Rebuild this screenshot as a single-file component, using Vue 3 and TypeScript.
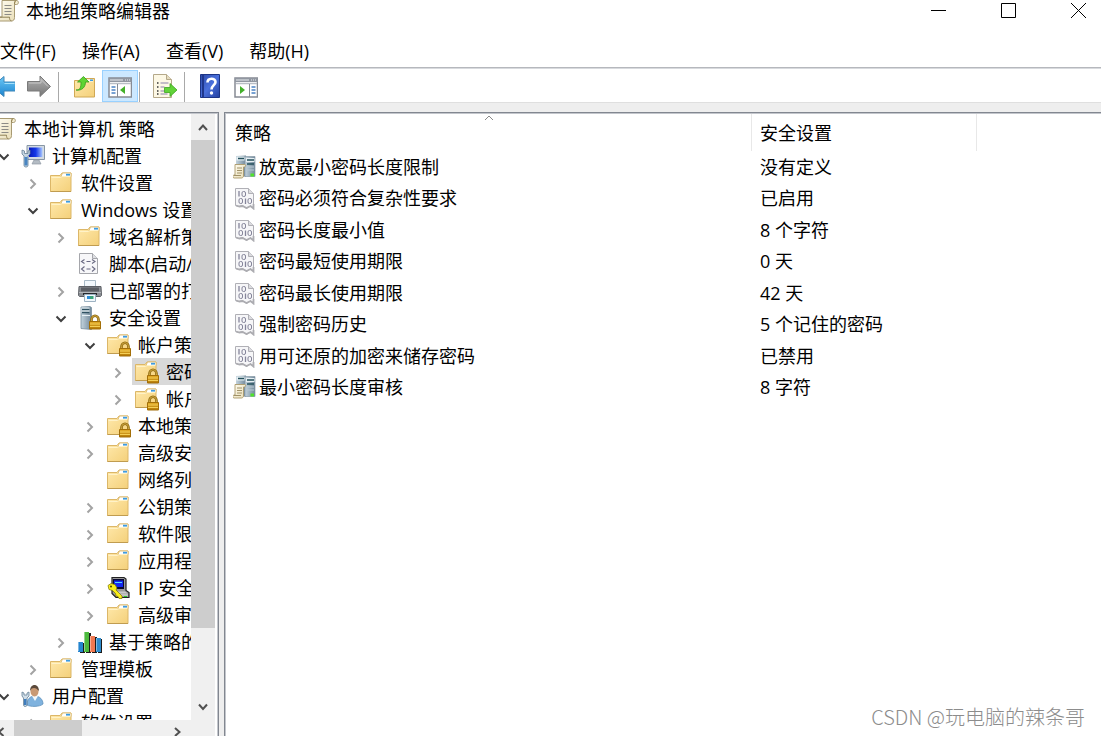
<script setup lang="ts">
import { ref } from 'vue'

interface TreeNode {
  id: number
  label: string
  level: number
  icon: string
  state: 'open' | 'closed' | 'leaf'
}

interface Policy {
  name: string
  value: string
  icon: string
}

const menus: string[] = ['文件(F)', '操作(A)', '查看(V)', '帮助(H)']

const nodes: TreeNode[] = [
  { id: 1, label: '本地计算机 策略', level: 0, icon: 'scroll', state: 'leaf' },
  { id: 2, label: '计算机配置', level: 1, icon: 'computer', state: 'open' },
  { id: 3, label: '软件设置', level: 2, icon: 'folder', state: 'closed' },
  { id: 4, label: 'Windows 设置', level: 2, icon: 'folder', state: 'open' },
  { id: 5, label: '域名解析策略', level: 3, icon: 'folder', state: 'closed' },
  { id: 6, label: '脚本(启动/关机)', level: 3, icon: 'script', state: 'leaf' },
  { id: 7, label: '已部署的打印机', level: 3, icon: 'printer', state: 'closed' },
  { id: 8, label: '安全设置', level: 3, icon: 'server-lock', state: 'open' },
  { id: 9, label: '帐户策略', level: 4, icon: 'folder-lock', state: 'open' },
  { id: 10, label: '密码策略', level: 5, icon: 'folder-lock', state: 'closed' },
  { id: 11, label: '帐户锁定策略', level: 5, icon: 'folder-lock', state: 'closed' },
  { id: 12, label: '本地策略', level: 4, icon: 'folder-lock', state: 'closed' },
  { id: 13, label: '高级安全', level: 4, icon: 'folder', state: 'closed' },
  { id: 14, label: '网络列表', level: 4, icon: 'folder', state: 'leaf' },
  { id: 15, label: '公钥策略', level: 4, icon: 'folder', state: 'closed' },
  { id: 16, label: '软件限制策略', level: 4, icon: 'folder', state: 'closed' },
  { id: 17, label: '应用程序控制', level: 4, icon: 'folder', state: 'closed' },
  { id: 18, label: 'IP 安全策略', level: 4, icon: 'ipsec', state: 'closed' },
  { id: 19, label: '高级审核策略', level: 4, icon: 'folder', state: 'closed' },
  { id: 20, label: '基于策略的 QoS', level: 3, icon: 'bars', state: 'closed' },
  { id: 21, label: '管理模板', level: 2, icon: 'folder', state: 'closed' },
  { id: 22, label: '用户配置', level: 1, icon: 'user', state: 'open' },
  { id: 23, label: '软件设置', level: 2, icon: 'folder', state: 'closed' }
]

const policies: Policy[] = [
  { name: '放宽最小密码长度限制', value: '没有定义', icon: 'policy-server' },
  { name: '密码必须符合复杂性要求', value: '已启用', icon: 'binary' },
  { name: '密码长度最小值', value: '8 个字符', icon: 'binary' },
  { name: '密码最短使用期限', value: '0 天', icon: 'binary' },
  { name: '密码最长使用期限', value: '42 天', icon: 'binary' },
  { name: '强制密码历史', value: '5 个记住的密码', icon: 'binary' },
  { name: '用可还原的加密来储存密码', value: '已禁用', icon: 'binary' },
  { name: '最小密码长度审核', value: '8 字符', icon: 'policy-server' }
]

const selected = ref<number>(10)
</script>

<template>
  <div class="window">
    <svg class="sprite" aria-hidden="true">
      <defs>
        <linearGradient id="g-folder" x1="0" y1="0" x2="1" y2="1">
          <stop offset="0" stop-color="#ffe9ac" />
          <stop offset="1" stop-color="#f4d07a" />
        </linearGradient>
        <linearGradient id="g-gold" x1="0" y1="0" x2="0" y2="1">
          <stop offset="0" stop-color="#e6b02c" />
          <stop offset="1" stop-color="#b57a06" />
        </linearGradient>
        <linearGradient id="g-blue" x1="0" y1="0" x2="0" y2="1">
          <stop offset="0" stop-color="#6cc8f6" />
          <stop offset="1" stop-color="#1b83cf" />
        </linearGradient>
        <linearGradient id="g-grey" x1="0" y1="0" x2="0" y2="1">
          <stop offset="0" stop-color="#b4b4b4" />
          <stop offset="1" stop-color="#757575" />
        </linearGradient>
        <linearGradient id="g-server" x1="0" y1="0" x2="1" y2="0">
          <stop offset="0" stop-color="#c3d3dd" />
          <stop offset="1" stop-color="#71889a" />
        </linearGradient>
        <linearGradient id="g-screen" x1="0" y1="0" x2="1" y2="0">
          <stop offset="0" stop-color="#0718b8" />
          <stop offset="0.5" stop-color="#1538e8" />
          <stop offset="1" stop-color="#a9c8ff" />
        </linearGradient>
        <linearGradient id="g-help" x1="0" y1="0" x2="1" y2="1">
          <stop offset="0" stop-color="#2c4aa8" />
          <stop offset="0.5" stop-color="#4a70dc" />
          <stop offset="1" stop-color="#2340a0" />
        </linearGradient>
        <linearGradient id="g-paper" x1="0" y1="0" x2="1" y2="1">
          <stop offset="0" stop-color="#fffdf2" />
          <stop offset="1" stop-color="#e8dcb4" />
        </linearGradient>
      </defs>

      <symbol id="i-folder" viewBox="0 0 24 24">
        <path d="M.5 4.500h9.500l2-2.500h9v18.500H.5z" fill="url(#g-folder)" stroke="#dcb768" />
        <path d="M12.500 2h8.500v3.500h-10z" fill="#fff" stroke="#d8b566" stroke-width=".8" />
        <path d="M16 2.800h4v1.800h-4z" fill="#3d9be0" />
        <path d="M1.500 6.500h9l1.500-1h8.500" fill="none" stroke="#fff2c8" />
        <path d="M.5 20.500h20.500" stroke="#c09c50" />
      </symbol>

      <symbol id="i-lock" viewBox="0 0 24 24">
        <path d="M14.500 16v-2.500a3.500 3.800 0 0 1 7 0v2.500" fill="none" stroke="#8f6b12" stroke-width="2.600" />
        <path d="M14.500 16v-2.500a3.500 3.800 0 0 1 7 0v2.500" fill="none" stroke="#cfa640" stroke-width="1" />
        <path d="M12.500 15.500h11v7.500h-11z" fill="url(#g-gold)" stroke="#a36f08" />
        <path d="M13 18h10M13 20.500h10" stroke="#f4cf58" />
      </symbol>

      <symbol id="i-folder-lock" viewBox="0 0 24 24">
        <use href="#i-folder" width="24" height="24" />
        <use href="#i-lock" width="24" height="24" />
      </symbol>

      <symbol id="i-server-lock" viewBox="0 0 24 24">
        <path d="M3 1l9-.5 1.500 1v22l-10.500-1z" fill="url(#g-server)" stroke="#7a8f9e" stroke-width=".8" />
        <path d="M3.500 1.500h8v5h-8z" fill="#e3edf2" />
        <path d="M4 3.500h7.500M4 6.500h7.500" stroke="#2f5162" stroke-width="1.400" />
        <path d="M4 9.500h8" stroke="#e6f0f5" />
        <use href="#i-lock" x="-1" width="24" height="24" />
      </symbol>

      <symbol id="i-scroll" viewBox="0 0 24 24">
        <path d="M6 1.500h14.500c2.500 0 2.500 4 0 4h-2v13c0 2-1 3.500-3 3.500H3c-2 0-2.500-3.500 0-4h3z" fill="url(#g-paper)" stroke="#a89a72" />
        <path d="M20.500 1.500c-2 0-2 2-2 4" fill="#cdb97b" stroke="#8f8055" />
        <path d="M3 18.200h10.500c0 2 .5 3.500 2 3.700" fill="none" stroke="#8f8055" />
        <path d="M8.500 6.500h7M8.500 9.500h7M8.500 12.500h7M8.500 15.500h7" stroke="#8c8b86" />
      </symbol>

      <symbol id="i-computer" viewBox="0 0 24 24">
        <path d="M6 1.500h17.500v14H6z" fill="#d4dbe2" stroke="#8796a5" />
        <path d="M8 3.500h13.500v9.500H8z" fill="url(#g-screen)" />
        <path d="M13 16h5l2 4h-9z" fill="#b4bcc4" stroke="#8f9aa5" stroke-width=".7" />
        <path d="M1 6v4l2 2v9.500c0 2 4 2 4 0V12l2-2V6L7 7v2.500H3.500V7z" fill="#c5d5e1" stroke="#668197" stroke-width=".8" />
        <path d="M3.500 13h3v8.500h-3z" fill="#4a86c2" />
      </symbol>

      <symbol id="i-script" viewBox="0 0 24 24">
        <path d="M1.500 1.500h13l5 5v15h-18z" fill="#f7f7f9" stroke="#a5a6ab" />
        <path d="M14.500 1.500v5h5" fill="#dedfe3" stroke="#a5a6ab" />
        <path d="M6.500 7.500l-3 2 3 2M8.500 9.500h4M14 7.500l3 2-3 2M6.500 14.500l-3 2.500 3 2.500M8.500 17h4M14 14.500l3 2.500-3 2.500" fill="none" stroke="#6b6b83" stroke-width="1.100" />
      </symbol>

      <symbol id="i-printer" viewBox="0 0 24 24">
        <path d="M6.500 1.500h11V8h-11z" fill="#f3f8fc" stroke="#a9bac6" />
        <path d="M1 7.500h22l.5 9-1 1h-21l-1-1z" fill="#8b8e94" stroke="#5d6066" />
        <path d="M3 8.500h18v4H3z" fill="#5b5e64" />
        <path d="M1 13.500h22" stroke="#b4b7bc" />
        <path d="M5 14h14v2H5z" fill="#26282c" />
        <path d="M6.500 15.500h11v7h-11z" fill="#f2f8fc" stroke="#9db2c2" />
        <path d="M9 17h3v3H9z" fill="#2c8bd4" /><path d="M12 17h3.500v3H12z" fill="#38a37a" />
      </symbol>

      <symbol id="i-ipsec" viewBox="0 0 24 24">
        <path d="M5 1.500h12l2 1.500v11.500l3 2v5H9l-4-4z" fill="#9a9a9a" stroke="#222" stroke-width="1.200" />
        <path d="M6 3h11v10H6z" fill="#0a0a30" />
        <path d="M7 4.500h9v6.500H7z" fill="#1328f0" /><path d="M8 6.500h7" stroke="#55d9ff" />
        <path d="M9 15.500h9l3 2H11z" fill="#c9c9c9" />
        <path d="M11 19h10" stroke="#e8e8e8" /><path d="M17 20.500h3" stroke="#2c2" />
        <path d="M1 9.500l3-2 4 1 2 3.500-1 2 6 6v2.500h-3l-1-2-2-.5-.5-2.500-3-3-3.500-1z" fill="#f9ee19" stroke="#7a7300" stroke-width=".7" />
        <circle cx="4" cy="10.500" r="1" fill="#403c00" />
      </symbol>

      <symbol id="i-bars" viewBox="0 0 24 24">
        <path d="M2 13h5v10H2zM8 3h5v20H8zM14 7h5v16h-5zM20 9h4v14h-4z" fill="#1b1b1b" />
        <path d="M0 12h5v10H0z" fill="#2585cf" /><path d="M6 2h5v20H6z" fill="#4cba3e" />
        <path d="M12 6h5v16h-5z" fill="#f07850" /><path d="M18 8h5v14h-5z" fill="#2f8ccc" />
        <path d="M.5 12v9M6.500 2v19M12.500 6v15M18.500 8v13" stroke="#ffffff66" />
      </symbol>

      <symbol id="i-user" viewBox="0 0 24 24">
        <path d="M6 21c0-6 3-9 8-9s8 4 8 8c-3 3-13 3-16 1z" fill="#7fb2de" stroke="#5e90bb" stroke-width=".8" />
        <path d="M11 12l3 5 3-5z" fill="#f5f9fc" />
        <ellipse cx="13.500" cy="7.500" rx="4" ry="5" fill="#c99a75" />
        <path d="M9 7c0-8 9-8 9 0-2-2-3-3-5-3-2 0-3 1-4 3z" fill="#5b493b" />
        <path d="M1 8v4l1.500 2v7c0 2 3.500 2 3.500 0v-7l2-2V8l-2 1v2H3V9z" fill="#d1dee8" stroke="#668197" stroke-width=".8" />
        <path d="M3 15h2.500v6H3z" fill="#3f7dbd" />
      </symbol>

      <symbol id="i-binary" viewBox="0 0 24 24">
        <path d="M2.500 2.500h13l5 5v14.500l-3-2-4 2.500-4-3-3.500 1-3.500-1z" fill="#f6f6f8" stroke="#b0b0b6" />
        <path d="M15.500 2.500v5h5" fill="#dcdce0" stroke="#b0b0b6" />
        <path d="M20.500 18v4.500l-3-2.500-4 2-4-2-3 .5-3.500-1" fill="none" stroke="#acacb1" stroke-width="1.800" />
        <path d="M6 5v5.500M12.500 12.500v5.500" stroke="#85859a" stroke-width="1.300" />
        <rect x="9" y="5.500" width="3.500" height="5" rx="1.500" fill="none" stroke="#85859a" />
        <rect x="6" y="12.500" width="3.500" height="5" rx="1.500" fill="none" stroke="#85859a" />
        <rect x="15" y="12.500" width="3.500" height="5" rx="1.500" fill="none" stroke="#85859a" />
      </symbol>

      <symbol id="i-policy-server" viewBox="0 0 24 24">
        <path d="M3 1l10-.5v21l-10 .5z" fill="url(#g-server)" />
        <path d="M12 1.500h10v20H12z" fill="url(#g-server)" stroke="#8799a6" stroke-width=".7" />
        <path d="M3.500 1.500h8v4h-8zM13 3h8.500v4H13z" fill="#e6eff3" />
        <path d="M5 3.500h6M14 5h7M14 9h7" stroke="#24505c" stroke-width="1.500" />
        <path d="M14 12h7M14 15h7" stroke="#b8cad4" />
        <path d="M17.500 18.500h3.500v3h-3.500z" fill="#4fe32c" />
        <path d="M2 9.500h9.500c1.500 0 1.500 2 0 2.500h-1v9c0 1-1 2-2 2H1c-1.500 0-1.500-3 0-3h1z" fill="url(#g-paper)" stroke="#aa986a" stroke-width=".9" />
        <path d="M4 13h5M4 15.500h5M4 18h5M1 20.500h7" stroke="#a09168" />
      </symbol>

      <symbol id="i-back" viewBox="0 0 24 24">
        <path d="M1 12.500L13 2.500v5.500h11.500v9H13v5.500z" fill="url(#g-blue)" stroke="#3f86b8" />
        <path d="M13.500 9.500h10" stroke="#a4e0fb" />
      </symbol>
      <symbol id="i-forward" viewBox="0 0 24 24">
        <path d="M23.500 12.500L13 2v5.500H.5v9.500H13v5.500z" fill="url(#g-grey)" stroke="#7a7a7a" />
        <path d="M2 9h12V5.500l7 7" fill="none" stroke="#c8c8c8" />
      </symbol>
      <symbol id="i-up" viewBox="0 0 24 24">
        <path d="M2.500 6.500h8v-2h12v18.500h-20z" fill="url(#g-folder)" stroke="#d0a855" />
        <path d="M14 5.500h7v2h-7z" fill="#fff" /><path d="M18 5.500h3v1.500h-3z" fill="#3d9be0" />
        <path d="M4 16c4 0 5-2 5-8H5.500l6-5.500L17 8h-3.500c0 5-3.500 9-9.500 8z" fill="#5fd433" stroke="#389e1c" stroke-width=".8" />
      </symbol>
      <symbol id="i-tree-pane" viewBox="0 0 24 24">
        <path d="M1 4h22.500v19H1z" fill="#fff" stroke="#868b94" stroke-width="1.500" />
        <path d="M1 4h22.500v4H1z" fill="#9197a1" /><path d="M2 6h13M17 6h1M19 6h1M21 6h1" stroke="#e9ecef" />
        <path d="M2 9.500h21" stroke="#b9bec6" stroke-width="1.500" /><path d="M9.500 10v13" stroke="#868b94" />
        <path d="M3.500 13h4M3.500 16h4M3.500 19h4" stroke="#4b83c4" stroke-width="1.300" />
        <path d="M17 12v8l-5-4z" fill="#43b02a" />
      </symbol>
      <symbol id="i-action-pane" viewBox="0 0 24 24">
        <path d="M1 4h22.500v19H1z" fill="#fff" stroke="#868b94" stroke-width="1.500" />
        <path d="M1 4h22.500v4H1z" fill="#9197a1" /><path d="M2 6h13M17 6h1M19 6h1M21 6h1" stroke="#e9ecef" />
        <path d="M2 9.500h21" stroke="#b9bec6" stroke-width="1.500" /><path d="M15.500 10v13" stroke="#868b94" />
        <path d="M17.500 13h4M17.500 16h4M17.500 19h4" stroke="#4b83c4" stroke-width="1.300" />
        <path d="M6 12v8l5-4z" fill="#43b02a" />
      </symbol>
      <symbol id="i-export" viewBox="0 0 24 24">
        <path d="M.5 .5h13l5 5v18H.5z" fill="#fdf8e5" stroke="#b5a98a" />
        <path d="M13.500 .5v5h5" fill="#e5dcc0" stroke="#b5a98a" />
        <path d="M4 9h1.500M4 13h1.500M4 17h1.500M4 20h1.500" stroke="#333" stroke-width="1.500" />
        <path d="M7.500 9h8M7.500 13h4M7.500 17h4M7.500 20h7" stroke="#8b82a8" />
        <path d="M11.500 13.500h5.500v-4l7 6.500-7 6.500v-4h-5.500z" fill="#62d33a" stroke="#3ba41e" stroke-width=".8" />
      </symbol>
      <symbol id="i-help" viewBox="0 0 24 24">
        <path d="M2.500 .5h19v23h-19z" fill="url(#g-help)" stroke="#1d3587" />
        <path d="M5 1v22" stroke="#1f378d" stroke-width="2" />
        <path d="M9.500 8.500c0-5 8-5 8-.5 0 3-4 3.500-4 7.500" fill="none" stroke="#fff" stroke-width="2.600" />
        <circle cx="13.500" cy="19" r="1.700" fill="#fff" />
      </symbol>
    </svg>

    <header class="titlebar">
      <svg class="icon title-icon"><use href="#i-scroll" /></svg>
      <h1>本地组策略编辑器</h1>
      <div class="window-buttons">
        <button type="button" aria-label="最小化"><svg viewBox="0 0 15 15"><path d="M0 7.500h15" /></svg></button>
        <button type="button" aria-label="最大化"><svg viewBox="0 0 15 15"><path d="M.5 .5h14v14H.5z" /></svg></button>
        <button type="button" aria-label="关闭"><svg viewBox="0 0 15 15"><path d="M0 0l15 15M15 0L0 15" /></svg></button>
      </div>
    </header>

    <nav class="menubar">
      <button v-for="menu in menus" :key="menu" type="button">{{ menu }}</button>
    </nav>

    <div class="toolbar" role="toolbar">
      <button type="button" aria-label="后退"><svg class="icon"><use href="#i-back" /></svg></button>
      <button type="button" aria-label="前进"><svg class="icon"><use href="#i-forward" /></svg></button>
      <span class="separator"></span>
      <button type="button" aria-label="向上"><svg class="icon"><use href="#i-up" /></svg></button>
      <button type="button" class="pressed" aria-pressed="true" aria-label="显示控制台树"><svg class="icon"><use href="#i-tree-pane" /></svg></button>
      <span class="separator"></span>
      <button type="button" aria-label="导出列表"><svg class="icon"><use href="#i-export" /></svg></button>
      <span class="separator"></span>
      <button type="button" aria-label="帮助"><svg class="icon"><use href="#i-help" /></svg></button>
      <button type="button" aria-label="显示操作窗格"><svg class="icon"><use href="#i-action-pane" /></svg></button>
    </div>

    <main class="body">
      <aside class="tree-pane">
        <div class="tree-area">
          <ul class="tree" role="tree">
            <li
              v-for="node in nodes"
              :key="node.id"
              role="treeitem"
              :aria-selected="node.id === selected"
              :class="['node', 'level-' + node.level, { selected: node.id === selected }]"
              @click="selected = node.id"
            >
              <svg class="twisty" viewBox="0 0 16 16">
                <path v-if="node.state === 'closed'" class="closed" d="M5.500 4.500L10 9l-4.500 4.500" />
                <path v-else-if="node.state === 'open'" class="open" d="M3.500 6.500L8 11l4.500-4.500" />
              </svg>
              <span class="content">
                <svg class="icon"><use :href="'#i-' + node.icon" /></svg>
                <span class="label">{{ node.label }}</span>
              </span>
            </li>
          </ul>
          <div class="vscroll">
            <button type="button" aria-label="向上滚动"><svg viewBox="0 0 12 12"><path d="M2 9l4-4.500L10 9" /></svg></button>
            <div class="vtrack"><div class="vthumb"></div></div>
            <button type="button" aria-label="向下滚动"><svg viewBox="0 0 12 12"><path d="M2 3.500L6 8l4-4.500" /></svg></button>
          </div>
        </div>
        <div class="hscroll">
          <button type="button" aria-label="向左滚动"><svg viewBox="0 0 12 12"><path d="M8.500 2L4 6l4.500 4" /></svg></button>
          <div class="htrack"><div class="hthumb"></div></div>
          <button type="button" aria-label="向右滚动"><svg viewBox="0 0 12 12"><path d="M3 2l4.500 4L3 10" /></svg></button>
        </div>
      </aside>

      <section class="list-pane">
        <table>
          <colgroup>
            <col class="col-name" />
            <col class="col-value" />
            <col />
          </colgroup>
          <thead>
            <tr>
              <th scope="col" aria-sort="ascending">
                策略
                <svg class="sort" viewBox="0 0 10 6"><path d="M1 5l4-4 4 4" /></svg>
              </th>
              <th scope="col">安全设置</th>
              <td></td>
            </tr>
          </thead>
          <tbody>
            <tr v-for="policy in policies" :key="policy.name">
              <td>
                <div class="policy">
                  <svg class="icon"><use :href="'#i-' + policy.icon" /></svg>
                  <span>{{ policy.name }}</span>
                </div>
              </td>
              <td>{{ policy.value }}</td>
              <td></td>
            </tr>
          </tbody>
        </table>
      </section>
    </main>

    <p class="watermark"><span class="brand">CSDN @</span>玩电脑的辣条哥</p>
  </div>
</template>

<style>
body {
  margin: 0;
  background: #fff;
}
</style>

<style scoped>
.window {
  position: relative;
  display: flex;
  flex-direction: column;
  height: 100vh;
  overflow: hidden;
  background: #fff;
  color: #000;
  font: 18px/24px "Open Sans", "Noto Sans CJK SC", sans-serif;
}

.sprite {
  position: absolute;
  width: 0;
  height: 0;
}

.icon {
  display: block;
  flex: none;
  width: 24px;
  height: 24px;
}

button {
  display: flex;
  align-items: center;
  justify-content: center;
  margin: 0;
  padding: 0;
  border: 0;
  background: none;
  color: inherit;
  font: inherit;
}

.titlebar {
  display: flex;
  flex: none;
  align-items: center;
  height: 21px;
}

.title-icon {
  margin-left: -4px;
}

h1 {
  margin: 0 auto 0 6px;
  font: inherit;
}

.window-buttons {
  display: flex;
  gap: 24px;
}

.window-buttons button {
  width: 46px;
  height: 21px;
}

.window-buttons svg {
  width: 15px;
  height: 15px;
  overflow: visible;
  fill: none;
  stroke: #000;
}

.menubar {
  display: flex;
  flex: none;
  gap: 26px;
  padding: 14px 0 0;
  height: 32px;
  border-bottom: 1px solid #b6b8bd;
  box-shadow: 0 1px #d8dade;
}

.toolbar {
  display: flex;
  flex: none;
  align-items: stretch;
  height: 32px;
  margin-left: -15px;
  padding-top: 2px;
}

.toolbar button {
  flex: none;
  box-sizing: border-box;
  width: 36px;
}

.toolbar .pressed {
  border: 1px solid #99d1ff;
  background: #cce8ff;
}

.separator {
  width: 1px;
  margin: 2px 7px 0 1px;
  background: #a9a9a9;
}

.body {
  display: flex;
  flex: 1;
  gap: 5px;
  min-height: 0;
  padding-top: 9px;
  border-top: 1px solid #dfdfdf;
  background: #eeeeee;
}

.tree-pane {
  display: flex;
  flex: none;
  flex-direction: column;
  width: 215px;
  padding-top: 1px;
  padding-right: 3px;
  border-top: 1px solid #828790;
  border-right: 1px solid #828790;
  box-shadow: inset -1px 1px #c3c6cc;
  background: #fff;
}

.tree-area {
  display: flex;
  flex: 1;
  min-height: 0;
}

.tree {
  flex: 1;
  min-width: 0;
  margin: 0;
  padding: 1px 0 0;
  overflow: hidden;
  list-style: none;
}

.node {
  display: flex;
  align-items: center;
  height: 27px;
  margin-left: -32px;
}

.level-1 { padding-left: 28px; }
.level-2 { padding-left: 57px; }
.level-3 { padding-left: 85px; }
.level-4 { padding-left: 114px; }
.level-5 { padding-left: 142px; }

.twisty {
  flex: none;
  width: 16px;
  height: 16px;
  margin-right: 6px;
  fill: none;
  stroke-width: 2;
}

.closed { stroke: #a3a3a3; }
.open { stroke: #404040; }

.content {
  display: flex;
  flex: 1;
  align-items: center;
  gap: 7px;
  min-width: 0;
  height: 27px;
  padding-left: 3px;
}

.selected .content {
  background: #d9d9d9;
}

.label {
  white-space: nowrap;
}

.vscroll {
  display: flex;
  flex: none;
  flex-direction: column;
  width: 24px;
  background: #f0f0f0;
}

.vscroll button {
  height: 26px;
}

.vscroll svg,
.hscroll svg {
  width: 12px;
  height: 12px;
  fill: none;
  stroke: #505050;
  stroke-width: 2;
}

.vtrack {
  flex: 1;
}

.vthumb {
  height: 88%;
  background: #cdcdcd;
}

.hscroll {
  display: flex;
  flex: none;
  height: 16px;
  margin-left: -12px;
  padding-right: 24px;
  overflow: hidden;
  background: #f0f0f0;
}

.hscroll button {
  width: 26px;
  height: 24px;
}

.htrack {
  flex: 1;
  height: 24px;
}

.hthumb {
  width: 45%;
  height: 24px;
  background: #cdcdcd;
}

.list-pane {
  flex: 1;
  min-width: 0;
  padding: 1px 0 0 1px;
  border-top: 1px solid #828790;
  border-left: 1px solid #828790;
  box-shadow: inset 1px 1px #c3c6cc;
  background: #fff;
}

table {
  width: 100%;
  border-collapse: separate;
  border-spacing: 0;
  table-layout: fixed;
}

.col-name { width: 526px; }
.col-value { width: 225px; }

th,
td {
  padding: 0 0 0 8px;
  text-align: left;
  font-weight: 400;
  white-space: nowrap;
}

th {
  position: relative;
  height: 37px;
  border-right: 1px solid #e8e8e8;
}

th:first-child {
  padding-left: 9px;
}

.sort {
  position: absolute;
  top: 1px;
  left: 50%;
  width: 10px;
  height: 6px;
  margin-left: -5px;
  fill: none;
  stroke: #8a8a8a;
}

tbody td {
  height: 31px;
}

tbody tr:nth-child(even) td {
  height: 32px;
}

tbody td:first-child {
  padding-left: 7px;
}

.policy {
  display: flex;
  align-items: center;
  gap: 2px;
}

.watermark {
  position: absolute;
  right: 16px;
  bottom: 7px;
  margin: 0;
  color: #8c8c8c;
  font: 300 20px/24px "Noto Sans CJK SC", sans-serif;
}

.brand {
  font-size: 20px;
}
</style>
